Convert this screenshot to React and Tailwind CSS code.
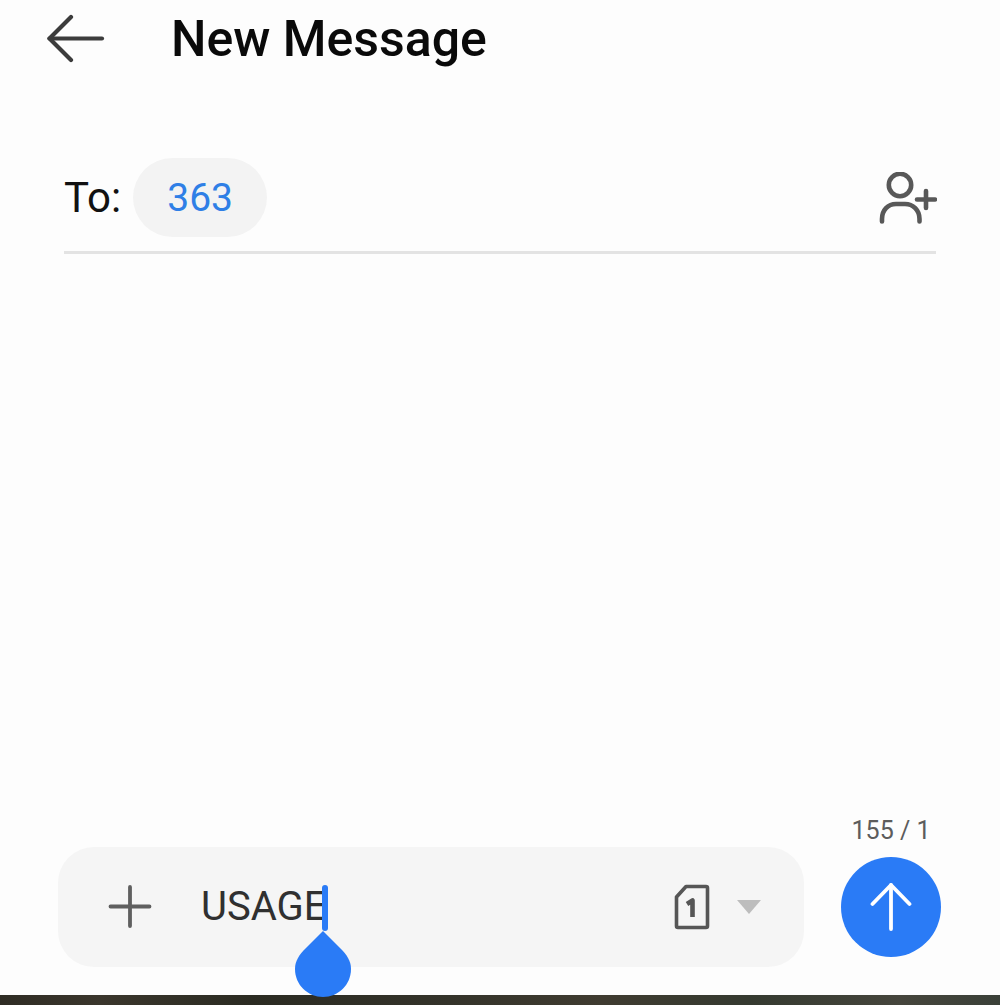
const font = { fontFamily: "Roboto, 'Noto Sans', sans-serif" };

function BackArrow() {
  return (
    <svg width="58" height="50" viewBox="0 0 58 50" fill="none" stroke="#3c3c3c" strokeWidth="4.2" strokeLinecap="round" strokeLinejoin="round">
      <path d="M2.500 24.500H55" />
      <path d="M24 3L2.500 24.500L24 46" />
    </svg>
  );
}

function AddContact() {
  return (
    <svg width="58" height="52" viewBox="0 0 58 52" fill="none" stroke="#585858" strokeWidth="4.6" strokeLinecap="round">
      <circle cx="21" cy="13" r="11.2" />
      <path d="M3 49.500V47C3 38 9 32 17 32H26C34 32 40.500 38 40.500 47V49.500" />
      <path d="M38 27.500H56M47 19V36" strokeWidth="4.600" />
    </svg>
  );
}

function Plus() {
  return (
    <svg width="44" height="44" viewBox="0 0 44 44" fill="none" stroke="#5f5f5f" strokeWidth="3.800" strokeLinecap="round">
      <path d="M2.500 21.500H41.500M22 2V41" />
    </svg>
  );
}

function Sim() {
  return (
    <svg width="36" height="46" viewBox="0 0 36 46" fill="none">
      <path d="M12 2.500H32C33 2.500 33.500 3 33.500 4V42C33.500 43 33 43.500 32 43.500H4C3 43.500 2.500 43 2.500 42V13Z" stroke="#565656" strokeWidth="3.600" strokeLinejoin="round" />
      <path d="M13 20L18.500 16.500V33" stroke="#565656" strokeWidth="4.600" strokeLinejoin="round" />
    </svg>
  );
}

function SendArrow() {
  return (
    <svg width="42" height="50" viewBox="0 0 42 50" fill="none" stroke="#ffffff" strokeWidth="3.800" strokeLinecap="round" strokeLinejoin="round">
      <path d="M21 3V47" />
      <path d="M2.500 22L21 3L39.500 22" />
    </svg>
  );
}

function Handle() {
  return (
    <svg width="56" height="66" viewBox="0 0 56 66" fill="#2a7bf6">
      <path d="M28 0L45 17C52 24 56 30 56 38C56 54 43 66 28 66C13 66 0 54 0 38C0 30 4 24 11 17Z" />
    </svg>
  );
}

export default function App() {
  return (
    <div className="h-[1005px] w-[1000px] flex flex-col bg-[#fdfdfd] overflow-hidden" style={font}>
      <header className="h-[78px] flex items-center pl-[47px]">
        <BackArrow />
        <h1 className="ml-[66px] text-[50px] leading-none font-medium text-[#0a0a0a]">New Message</h1>
      </header>

      <div className="mx-[64px] mt-[80px] h-[96px] pb-[15px] flex items-center border-b-[3px] border-[#e3e3e3]">
        <span className="text-[42px] leading-none text-[#111111] mt-[2px]">To:</span>
        <span className="ml-[12px] h-[79px] w-[134px] rounded-full bg-[#f3f3f3] flex items-center justify-center pt-[2px] text-[39px] text-[#2f7fe6]">363</span>
        <span className="ml-auto flex -mr-[1px] mt-[2px]"><AddContact /></span>
      </div>

      <div className="flex-1" />

      <div className="flex items-end pl-[58px] pb-[28px]">
        <div className="relative w-[746px] h-[120px] rounded-[36px] bg-[#f5f5f5] flex items-center pl-[50px] pr-[43px]">
          <Plus />
          <span className="ml-[49px] text-[40px] leading-none text-[#303030]">USAGE</span>
          <span className="absolute left-[264px] top-[38px] w-[6px] h-[46px] rounded-full bg-[#2a7bf6]" />
          <span className="absolute left-[237px] top-[84px] flex"><Handle /></span>
          <span className="ml-auto flex"><Sim /></span>
          <span className="ml-[27px] w-0 h-0 border-l-[12px] border-r-[12px] border-t-[14px] border-l-transparent border-r-transparent border-t-[#bdbdbd]" />
        </div>
        <div className="ml-[37px] w-[100px] flex flex-col items-center mb-[10px]">
          <span className="text-[25px] leading-none text-[#5c5c5c] mb-[14px]">155 / 1</span>
          <span className="w-[100px] h-[100px] rounded-full bg-[#2a7bf6] flex items-center justify-center"><SendArrow /></span>
        </div>
      </div>

      <div className="h-[10px] bg-[linear-gradient(90deg,#2f2c24,#3a362c_10%,#2b2b22_25%,#34332a_45%,#3f3b30_60%,#353a30_75%,#45453c_90%,#3a4038)]" />
    </div>
  );
}
